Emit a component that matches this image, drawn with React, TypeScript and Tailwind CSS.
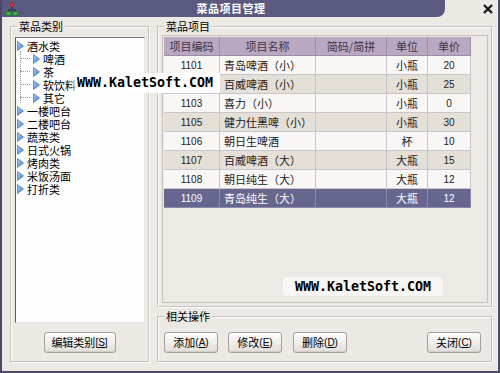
import React from 'react';

const cjk = { fontFamily: '"Noto Sans CJK SC", "Liberation Sans", sans-serif' };
const num = { fontFamily: '"Liberation Sans", "Noto Sans CJK SC", sans-serif' };

interface TreeNode {
  label: string;
  level: number;
}

const treeNodes: TreeNode[] = [
  { label: '酒水类', level: 0 },
  { label: '啤酒', level: 1 },
  { label: '茶', level: 1 },
  { label: '软饮料', level: 1 },
  { label: '其它', level: 1 },
  { label: '一楼吧台', level: 0 },
  { label: '二楼吧台', level: 0 },
  { label: '蔬菜类', level: 0 },
  { label: '日式火锅', level: 0 },
  { label: '烤肉类', level: 0 },
  { label: '米饭汤面', level: 0 },
  { label: '打折类', level: 0 },
];

const items = [
  { code: '1101', name: '青岛啤酒（小）', unit: '小瓶', price: '20' },
  { code: '1102', name: '百威啤酒（小）', unit: '小瓶', price: '25' },
  { code: '1103', name: '喜力（小）', unit: '小瓶', price: '0' },
  { code: '1105', name: '健力仕黑啤（小）', unit: '小瓶', price: '30' },
  { code: '1106', name: '朝日生啤酒', unit: '杯', price: '10' },
  { code: '1107', name: '百威啤酒（大）', unit: '大瓶', price: '15' },
  { code: '1108', name: '朝日纯生（大）', unit: '大瓶', price: '12' },
  { code: '1109', name: '青岛纯生（大）', unit: '大瓶', price: '12' },
];

function Arrow() {
  return (
    <svg width="7" height="10" viewBox="0 0 7 10" className="shrink-0">
      <defs>
        <linearGradient id="ag" x1="0" y1="0" x2="1" y2="1">
          <stop offset="0" stopColor="#a9cdf5" />
          <stop offset="1" stopColor="#3f7fd0" />
        </linearGradient>
      </defs>
      <polygon points="0.5,0.5 6.5,5 0.5,9.5" fill="url(#ag)" stroke="#4a80c4" strokeWidth="0.8" />
    </svg>
  );
}

function AppIcon() {
  return (
    <svg width="14" height="14" viewBox="0 0 14 14">
      <path d="M7 5 V8 M3.5 8 H10.5 M3.5 8 V10 M10.5 8 V10" stroke="#1f2a44" strokeWidth="1" fill="none" />
      <polygon points="7,0.5 9.5,3 7,5.5 4.5,3" fill="#e03030" stroke="#8a1010" strokeWidth="0.6" />
      <rect x="1" y="9.5" width="5" height="4" fill="#3cb043" stroke="#1d6a22" strokeWidth="0.6" />
      <rect x="8" y="9.5" width="5" height="4" fill="#3cb043" stroke="#1d6a22" strokeWidth="0.6" />
    </svg>
  );
}

function GroupBox({ title, className, children }: { title: string; className: string; children: React.ReactNode }) {
  return (
    <div className={`relative border border-[#c4c0ba] shadow-[inset_1px_1px_0_#ffffff,1px_1px_0_#ffffff] ${className}`}>
      <span className="absolute -top-[8px] left-[6px] bg-[#ece9e5] px-[2px] text-[11px] leading-[14px] text-black" style={cjk}>
        {title}
      </span>
      {children}
    </div>
  );
}

function Button({ label, hot, width = 'w-[54px]', bracket = 'paren' }: { label: string; hot: string; width?: string; bracket?: 'paren' | 'square' }) {
  const open = bracket === 'paren' ? '(' : '[';
  const close = bracket === 'paren' ? ')' : ']';
  return (
    <button
      className={`${width} h-[21px] rounded-[3px] border border-[#a3a09b] bg-gradient-to-b from-[#fdfdfc] to-[#e2dfda] text-[11px] leading-none text-black flex items-center justify-center shadow-[inset_0_-1px_0_#d2cec8]`}
      style={cjk}
    >
      {label}
      <span className="text-[10px]" style={num}>{open}<span className="underline">{hot}</span>{close}</span>
    </button>
  );
}

export default function App() {
  return (
    <div className="w-[500px] h-[373px] overflow-hidden bg-[#ece9e5] border-x-2 border-b-2 border-[#4b4b68] flex flex-col relative">
      {/* title bar */}
      <div className="h-[17px] flex shrink-0">
        <div className="w-[443px] h-[17px] bg-[#5a5a81] rounded-br-[8px] flex items-center relative">
          <div className="pl-[3px] pt-[1px]">
            <AppIcon />
          </div>
          <div className="flex-1 flex justify-center pr-[2px]">
            <span className="text-white font-bold text-[11px] leading-none tracking-[0.5px]" style={cjk}>
              菜品项目管理
            </span>
          </div>
        </div>
        <div className="flex-1 flex items-start justify-end pr-[5px] pt-[4px]">
          <svg width="10" height="10" viewBox="0 0 10 10">
            <path d="M1 1 L9 9 M9 1 L1 9" stroke="#111" strokeWidth="2.2" />
          </svg>
        </div>
      </div>

      {/* body */}
      <div className="flex pt-[9px] pl-[8px] gap-[8px]">
        {/* left group */}
        <GroupBox title="菜品类别" className="w-[139px] h-[336px] flex flex-col items-center pt-[10px]">
          <div className="self-start ml-[4px] w-[130px] h-[286px] bg-[#fdfdfd] border border-t-[#7c7c7c] border-l-[#5c5c5c] border-r-[#e8e6e2] border-b-[#e8e6e2] pt-[1px] relative">
            <div className="absolute left-[4px] top-[13px] h-[52px] border-l border-dotted border-[#9a9a9a]" />
            {treeNodes.map((n) => (
              <div key={n.label} className={`flex items-center h-[13px] gap-[3px] ${n.level === 0 ? 'pl-[1px]' : 'pl-[4px]'}`}>
                {n.level === 1 && <div className="w-[10px] border-t border-dotted border-[#9a9a9a]" />}
                <Arrow />
                <span className="text-[11px] leading-[12px] text-black whitespace-nowrap" style={cjk}>
                  {n.label}
                </span>
              </div>
            ))}
          </div>
          <div className="mt-[9px]">
            <Button label="编辑类别" hot="S" width="w-[72px]" bracket="square" />
          </div>
        </GroupBox>

        {/* right column */}
        <div className="flex flex-col gap-[9px]">
          <GroupBox title="菜品项目" className="w-[335px] h-[281px] pt-[8px] pl-[4px]">
            <div className="w-[326px] h-[268px] border border-[#c6c2bb] bg-[#edeae6] p-[1px]">
              <div className="grid grid-cols-[56px_96px_71px_41px_43px] w-[307px]">
                {['项目编码', '项目名称', '简码/简拼', '单位', '单价'].map((h) => (
                  <div
                    key={h}
                    className="h-[19px] bg-[#b8a8c1] border-r border-b border-[#9d8ca8] flex items-center justify-center text-[11px] text-[#3d3346]"
                    style={cjk}
                  >
                    {h}
                  </div>
                ))}
                {items.map((it, i) => {
                  const sel = i === items.length - 1;
                  const bg = sel ? 'bg-[#66668f] text-white border-[#8a8aac]' : i % 2 === 0 ? 'bg-[#f9f7f5] text-[#222] border-[#cdc3cd]' : 'bg-[#e4dfd7] text-[#222] border-[#cdc3cd]';
                  const cell = `h-[19px] border-r border-b flex items-center ${bg}`;
                  return (
                    <React.Fragment key={it.code}>
                      <div className={`${cell} justify-center text-[10px]`} style={num}>{it.code}</div>
                      <div className={`${cell} pl-[4px] text-[11px] whitespace-nowrap`} style={cjk}>{it.name}</div>
                      <div className={cell} />
                      <div className={`${cell} justify-center text-[11px]`} style={cjk}>{it.unit}</div>
                      <div className={`${cell} justify-center text-[10px]`} style={num}>{it.price}</div>
                    </React.Fragment>
                  );
                })}
              </div>
            </div>
          </GroupBox>

          <GroupBox title="相关操作" className="w-[335px] h-[46px] pt-[15px] pl-[6px] pr-[10px]">
            <div className="flex items-center">
              <Button label="添加" hot="A" />
              <div className="ml-[10px]"><Button label="修改" hot="E" /></div>
              <div className="ml-[11px]"><Button label="删除" hot="D" /></div>
              <div className="ml-auto"><Button label="关闭" hot="C" /></div>
            </div>
          </GroupBox>
        </div>
      </div>

      {/* watermarks */}
      <div
        className="absolute left-[70px] top-[73px] w-[148px] h-[20px] bg-gradient-to-r from-white/40 via-white/95 to-white/95 flex items-center pl-[5px] text-[13.3px] font-bold text-black leading-none"
        style={{ fontFamily: '"DejaVu Sans Mono", "Liberation Mono", monospace' }}
      >
        WWW.KaletSoft.COM
      </div>
      <div
        className="absolute left-[281px] top-[277px] w-[160px] h-[19px] rounded-[4px] bg-[#f7f6f3] flex items-center justify-center text-[13.3px] font-bold text-black leading-none"
        style={{ fontFamily: '"DejaVu Sans Mono", "Liberation Mono", monospace' }}
      >
        WWW.KaletSoft.COM
      </div>
    </div>
  );
}
